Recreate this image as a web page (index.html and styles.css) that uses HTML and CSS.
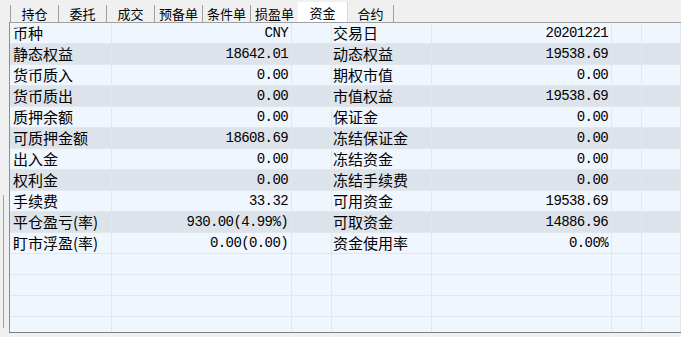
FILE: index.html
```html
<!DOCTYPE html>
<html lang="zh-CN">
<head>
  <meta charset="UTF-8">
  <title>资金</title>
  <link rel="stylesheet" href="styles.css">
</head>
<body>
<div class="side"><div class="split"></div></div>

<div class="main">
  <div class="tabs">
    <div class="tab">持仓</div>
    <div class="tab">委托</div>
    <div class="tab">成交</div>
    <div class="tab">预备单</div>
    <div class="tab">条件单</div>
    <div class="tab">损盈单</div>
    <div class="tab active">资金</div>
    <div class="tab last">合约</div>
  </div>

  <div class="grid">
    <div class="row"><div class="c1">币种</div><div class="c2">CNY</div><div class="c3"></div><div class="c4">交易日</div><div class="c5">20201221</div><div class="c6"></div><div class="c7"></div></div>
    <div class="row alt"><div class="c1">静态权益</div><div class="c2">18642.01</div><div class="c3"></div><div class="c4">动态权益</div><div class="c5">19538.69</div><div class="c6"></div><div class="c7"></div></div>
    <div class="row"><div class="c1">货币质入</div><div class="c2">0.00</div><div class="c3"></div><div class="c4">期权市值</div><div class="c5">0.00</div><div class="c6"></div><div class="c7"></div></div>
    <div class="row alt"><div class="c1">货币质出</div><div class="c2">0.00</div><div class="c3"></div><div class="c4">市值权益</div><div class="c5">19538.69</div><div class="c6"></div><div class="c7"></div></div>
    <div class="row"><div class="c1">质押余额</div><div class="c2">0.00</div><div class="c3"></div><div class="c4">保证金</div><div class="c5">0.00</div><div class="c6"></div><div class="c7"></div></div>
    <div class="row alt"><div class="c1">可质押金额</div><div class="c2">18608.69</div><div class="c3"></div><div class="c4">冻结保证金</div><div class="c5">0.00</div><div class="c6"></div><div class="c7"></div></div>
    <div class="row"><div class="c1">出入金</div><div class="c2">0.00</div><div class="c3"></div><div class="c4">冻结资金</div><div class="c5">0.00</div><div class="c6"></div><div class="c7"></div></div>
    <div class="row alt"><div class="c1">权利金</div><div class="c2">0.00</div><div class="c3"></div><div class="c4">冻结手续费</div><div class="c5">0.00</div><div class="c6"></div><div class="c7"></div></div>
    <div class="row"><div class="c1">手续费</div><div class="c2">33.32</div><div class="c3"></div><div class="c4">可用资金</div><div class="c5">19538.69</div><div class="c6"></div><div class="c7"></div></div>
    <div class="row alt"><div class="c1">平仓盈亏(率)</div><div class="c2">930.00(4.99%)</div><div class="c3"></div><div class="c4">可取资金</div><div class="c5">14886.96</div><div class="c6"></div><div class="c7"></div></div>
    <div class="row"><div class="c1">盯市浮盈(率)</div><div class="c2">0.00(0.00)</div><div class="c3"></div><div class="c4">资金使用率</div><div class="c5">0.00%</div><div class="c6"></div><div class="c7"></div></div>
    <!-- empty rows -->
    <div class="row"><div class="c1"></div><div class="c2"></div><div class="c3"></div><div class="c4"></div><div class="c5"></div><div class="c6"></div><div class="c7"></div></div>
    <div class="row"><div class="c1"></div><div class="c2"></div><div class="c3"></div><div class="c4"></div><div class="c5"></div><div class="c6"></div><div class="c7"></div></div>
    <div class="row"><div class="c1"></div><div class="c2"></div><div class="c3"></div><div class="c4"></div><div class="c5"></div><div class="c6"></div><div class="c7"></div></div>
    <div class="row"><div class="c1"></div><div class="c2"></div><div class="c3"></div><div class="c4"></div><div class="c5"></div><div class="c6"></div><div class="c7"></div></div>
  </div>
</div>
</body>
</html>
```

FILE: styles.css
```css
body {
  margin: 0;
  padding: 0;
  background-color: #f0f0f0;
  display: flex;
  height: 337px;
  overflow: hidden;
  font-family: "Noto Sans CJK SC", sans-serif;
  color: #000;
}

.side {
  width: 9px;
  flex-shrink: 0;
  padding-top: 195px;
  box-sizing: border-box;
}

.split {
  width: 1px;
  height: 133px;
  margin-left: 3px;
  background-color: #a0a0a0;
}

.main {
  flex: 1;
  min-width: 0;
}

.tabs {
  display: flex;
  height: 22px;
  padding-left: 1px;
  align-items: flex-end;
}

.tab {
  width: 48px;
  height: 17px;
  box-sizing: border-box;
  border-left: 1px solid #a0a0a0;
  font-size: 13px;
  line-height: 17px;
  text-align: center;
}

.tab.active {
  width: 50px;
  height: 20px;
  line-height: 22px;
  background-color: #fff;
  border-left: none;
  border-right: 1px solid #d8d8d8;
}

.tab.last {
  width: 46px;
  border-left: none;
  border-right: 1px solid #a0a0a0;
}

.grid {
  height: 311px;
  box-sizing: border-box;
  border-top: 1px solid #a0a0a0;
  border-left: 1px solid #8c8c8c;
  border-bottom: 1px solid #7f7f7f;
  overflow: hidden;
  background-color: #eff6fe;
}

.row {
  display: flex;
  height: 21px;
  box-sizing: border-box;
  border-bottom: 1px solid #e3e7ec;
  background-color: #eff6fe;
}

.row.alt {
  background-color: #dde3ea;
}

.row > div {
  height: 20px;
  box-sizing: border-box;
  border-right: 1px solid #e3e7ec;
  white-space: nowrap;
  overflow: hidden;
}

.c1, .c4 {
  font-size: 15px;
  line-height: 20px;
  padding-left: 3px;
}

.c2, .c5 {
  font-family: "Liberation Mono", "Noto Sans CJK SC", monospace;
  font-size: 14px;
  letter-spacing: -0.6px;
  line-height: 21px;
  text-align: right;
  padding-right: 3px;
}

.c1 { width: 102px; }
.c2 { width: 180px; }
.c3 { width: 40px; }
.c4 { width: 100px; padding-left: 1px; }
.c5 { width: 180px; }
.c6 { width: 30px; }
.c7 { flex: 1; }
```
